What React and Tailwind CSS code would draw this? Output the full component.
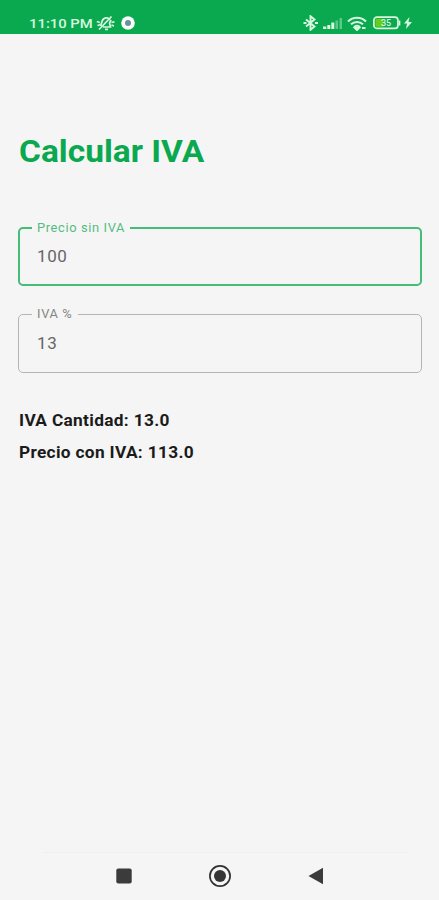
import React from "react";

function StatusBar() {
  return (
    <header className="flex h-[34px] items-start justify-between bg-[#0aa950] pt-[14px] pr-[27px] pl-[29px] text-[#d9f7df]">
      <div className="flex h-[18px] items-center">
        <span className="w-[67px] origin-left scale-x-[1.1] text-[13.5px] leading-[18px] font-medium whitespace-nowrap">11:10 PM</span>
        <svg width="19" height="16" viewBox="0 0 19 16" fill="none" stroke="currentColor" strokeWidth="1.7">
          <path d="M4.500 11 6 6.500c1-4 6.500-5 8-1.500M7 12h7.500L13.500 8 15 5M9 14.300h3M3 14.500 15.500 1.500M.8 6.500l3 1M1.500 10.500l2.500-.8M15.500 7.500l3-.8M15.500 10l2.500 1" />
        </svg>
        <svg className="ml-[6px]" width="14" height="14" viewBox="0 0 14 14">
          <circle cx="7" cy="7" r="6.8" fill="#f6fff8" />
          <circle cx="7" cy="7" r="3" fill="#6b8f9d" />
        </svg>
      </div>
      <div className="flex h-[18px] items-center">
        <svg width="15" height="16" viewBox="0 0 15 16" fill="none" stroke="currentColor" strokeWidth="1.900">
          <path d="m3 4.500 8.500 7-4 3.300V1.200l4 3.300L3 11.500" />
          <path d="M.5 8h3M12 8h3" strokeWidth="2" />
        </svg>
        <svg className="ml-[5px]" width="20" height="14" viewBox="0 0 20 14" fill="currentColor">
          <path d="M0 10.500h3.300V13H0zM4.300 9h3v4h-3zM8.300 6.500h3V13h-3z" />
          <path d="M12.500 4.500H15V13h-2.500zM16.500 2H19v11h-2.500z" opacity=".4" />
        </svg>
        <svg className="ml-[4px]" width="21" height="15" viewBox="0 0 21 15" fill="none" stroke="currentColor" strokeWidth="2">
          <path d="M1 5.500C6 .5 14 .5 19 5.500M4 8.300c3.500-3.200 8.500-3.200 12 0M7 11c2-1.700 4-1.700 6 0" />
          <path d="m8 12 2 2 2-2zM15 12h3.500" />
        </svg>
        <svg className="ml-[5px]" width="28" height="14" viewBox="0 0 28 14">
          <rect x=".9" y="1.200" width="24" height="11.200" rx="3" fill="none" stroke="currentColor" strokeWidth="1.700" />
          <rect x="2.500" y="2.800" width="8" height="8" rx="1" fill="#65cf16" />
          <path d="M26.500 4.500v5" stroke="currentColor" strokeWidth="1.700" />
          <text x="13" y="10.200" textAnchor="middle" fontFamily="Roboto, sans-serif" fontSize="9" fontWeight="500" fill="currentColor">35</text>
        </svg>
        <svg className="ml-[3px]" width="8" height="12" viewBox="0 0 8 12" fill="currentColor">
          <path d="M5.500 0 0 6.500h3L2 12l6-7H4.500z" />
        </svg>
      </div>
    </header>
  );
}

function NavigationBar() {
  return (
    <nav className="mt-auto flex h-[48px] flex-col">
      <div className="mr-[31px] ml-[42px] h-px bg-[#efefef]" />
      <div className="flex h-[46px] items-center pl-[116px]">
        <svg width="16" height="16" viewBox="0 0 16 16"><rect x=".3" y=".5" width="15.400" height="15" rx="2" fill="#3b3b3b" /></svg>
        <svg className="ml-[77px]" width="22" height="22" viewBox="0 0 22 22">
          <circle cx="11" cy="11" r="10.100" fill="none" stroke="#303030" strokeWidth="1.700" />
          <circle cx="11" cy="11" r="6" fill="#353535" />
        </svg>
        <svg className="ml-[77px]" width="16" height="18" viewBox="0 0 16 18"><path d="M15 .8v16.400L.5 9z" fill="#3b3b3b" /></svg>
      </div>
    </nav>
  );
}

export default function App() {
  return (
    <div className="flex h-[900px] w-[439px] flex-col overflow-hidden bg-[#f5f5f5] font-[Roboto,sans-serif]">
      <StatusBar />
      <main className="flex flex-col pr-[17px] pl-[18px]">
        <h1 className="mt-[98px] ml-px h-[40px] origin-left scale-x-[1.08] text-[31px] leading-[40px] font-bold text-[#0aa84f]">Calcular IVA</h1>
        <fieldset className="mt-[48px] h-[66px] rounded-[5px] border-2 border-[#45bd78] pl-[12px]">
          <legend className="h-[16px] w-[98px] px-[5px] text-[12px] leading-[17px] tracking-[0.6px] whitespace-nowrap text-[#52bd80]">
            <span className="inline-block origin-left scale-x-[1.07]">Precio sin IVA</span>
          </legend>
          <div className="pt-[8px] pl-[5px] text-[17px] leading-[24px] tracking-[0.6px] text-[#666]">100</div>
        </fieldset>
        <fieldset className="mt-[20px] h-[67px] rounded-[5px] border border-[#b5b5b5] pl-[13px]">
          <legend className="h-[16px] w-[46px] px-[5px] text-[12px] leading-[17px] tracking-[0.6px] whitespace-nowrap text-[#858585]">
            <span className="inline-block origin-left scale-x-[1.07]">IVA %</span>
          </legend>
          <div className="pt-[9px] pl-[5px] text-[17px] leading-[24px] tracking-[0.6px] text-[#666]">13</div>
        </fieldset>
        <p className="mt-[36px] ml-px h-[24px] origin-left scale-x-[1.08] text-[16px] leading-[24px] font-bold tracking-[0.3px] text-[#1b1b1b]">IVA Cantidad: 13.0</p>
        <p className="mt-[8px] ml-px h-[24px] origin-left scale-x-[1.08] text-[16px] leading-[24px] font-bold tracking-[0.3px] text-[#1b1b1b]">Precio con IVA: 113.0</p>
      </main>
      <NavigationBar />
    </div>
  );
}
